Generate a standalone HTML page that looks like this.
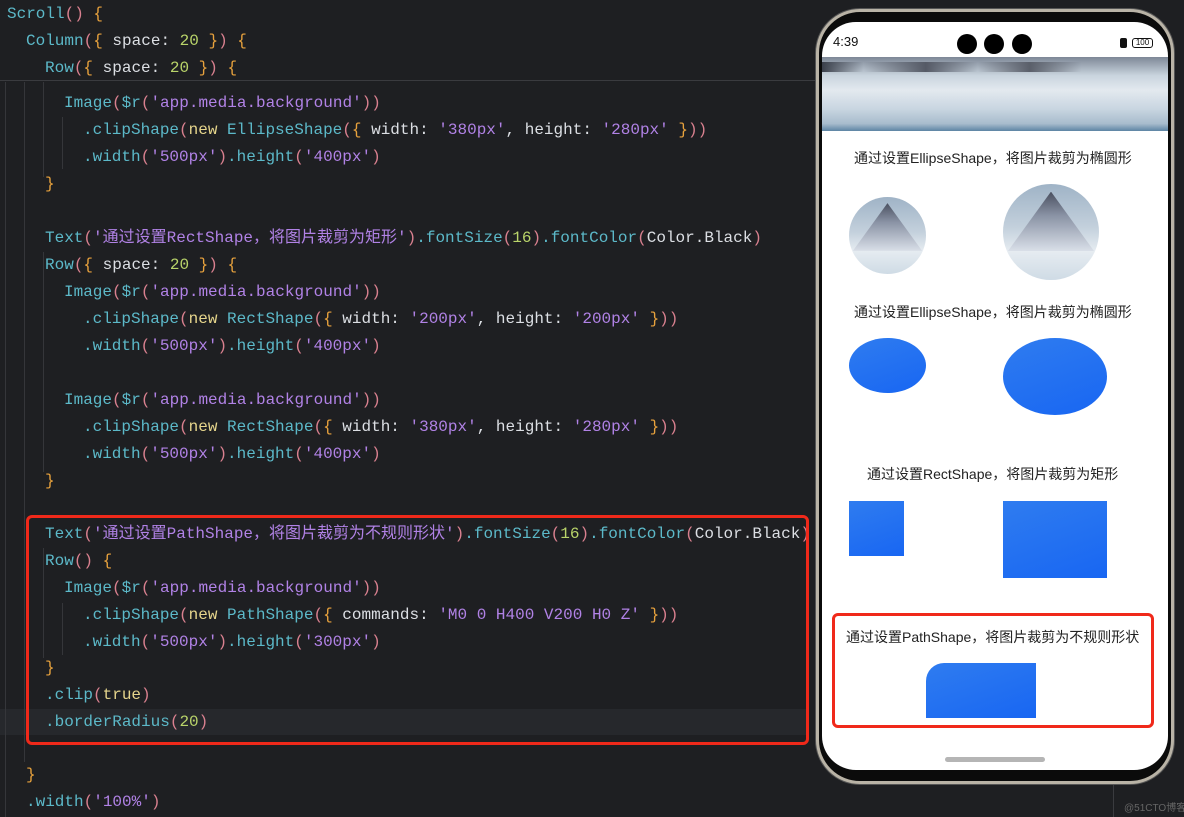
<!DOCTYPE html>
<html><head><meta charset="utf-8"><style>
*{margin:0;padding:0;box-sizing:border-box}
body{width:1184px;height:817px;background:#1e1f22;position:relative;overflow:hidden;font-family:"Liberation Mono","Noto Sans CJK SC",monospace}
.l{position:absolute;left:0;height:22px;line-height:22px;font-size:16px;white-space:pre;color:#dcdfe4}
.f{color:#5cb9c9}.p{color:#d9808f}.b{color:#e8a23d}.s{color:#b182e6}.n{color:#b9d46a}.k{color:#e6d58c}
.g{position:absolute;width:1px;background:#35363a}
.ph{font-family:"Liberation Sans","Noto Sans CJK SC",sans-serif;color:#222;font-size:14px;position:absolute;white-space:nowrap}
.blue{position:absolute;background:linear-gradient(160deg,#2f7cf0,#1866f2)}
.mt{position:absolute;border-radius:50%;overflow:hidden;background:linear-gradient(180deg,#9fb3c6 0%,#c3d0dc 45%,#e6ecf1 70%,#cfdbe5 100%)}
.mt::before{content:"";position:absolute;left:5%;top:8%;width:90%;height:62%;background:linear-gradient(180deg,#4a5060 0%,#8a93a5 40%,#d9dfe8 100%);clip-path:polygon(50% 0,100% 100%,0 100%)}
</style></head><body>
<div style="position:absolute;left:0;top:0;width:820px;height:81px;border-bottom:1px solid #3a3b3f"></div>
<div style="position:absolute;left:0;top:709px;width:808px;height:26px;background:#26282c"></div>
<div class="g" style="left:5px;top:82px;height:735px"></div>
<div class="g" style="left:24px;top:82px;height:680px"></div>
<div class="g" style="left:43px;top:82px;height:95px"></div>
<div class="g" style="left:62px;top:117px;height:52px"></div>
<div class="g" style="left:43px;top:252px;height:220px"></div>
<div class="g" style="left:43px;top:548px;height:110px"></div>
<div class="g" style="left:62px;top:603px;height:52px"></div>

<div class="l" style="top:3px;left:7px"><span class="f">Scroll</span><span class="p">()</span> <span class="b">{</span></div>
<div class="l" style="top:30px;left:26px"><span class="f">Column</span><span class="p">(</span><span class="b">{</span> space: <span class="n">20</span> <span class="b">}</span><span class="p">)</span> <span class="b">{</span></div>
<div class="l" style="top:57px;left:45px"><span class="f">Row</span><span class="p">(</span><span class="b">{</span> space: <span class="n">20</span> <span class="b">}</span><span class="p">)</span> <span class="b">{</span></div>
<div class="l" style="top:92px;left:64px"><span class="f">Image</span><span class="p">(</span><span class="f">$r</span><span class="p">(</span><span class="s">'app.media.background'</span><span class="p">))</span></div>
<div class="l" style="top:119px;left:83px"><span class="f">.clipShape</span><span class="p">(</span><span class="k">new</span> <span class="f">EllipseShape</span><span class="p">(</span><span class="b">{</span> width: <span class="s">'380px'</span>, height: <span class="s">'280px'</span> <span class="b">}</span><span class="p">))</span></div>
<div class="l" style="top:146px;left:83px"><span class="f">.width</span><span class="p">(</span><span class="s">'500px'</span><span class="p">)</span><span class="f">.height</span><span class="p">(</span><span class="s">'400px'</span><span class="p">)</span></div>
<div class="l" style="top:173px;left:45px"><span class="b">}</span></div>
<div class="l" style="top:227px;left:45px"><span class="f">Text</span><span class="p">(</span><span class="s">'通过设置RectShape，将图片裁剪为矩形'</span><span class="p">)</span><span class="f">.fontSize</span><span class="p">(</span><span class="n">16</span><span class="p">)</span><span class="f">.fontColor</span><span class="p">(</span>Color.Black<span class="p">)</span></div>
<div class="l" style="top:254px;left:45px"><span class="f">Row</span><span class="p">(</span><span class="b">{</span> space: <span class="n">20</span> <span class="b">}</span><span class="p">)</span> <span class="b">{</span></div>
<div class="l" style="top:281px;left:64px"><span class="f">Image</span><span class="p">(</span><span class="f">$r</span><span class="p">(</span><span class="s">'app.media.background'</span><span class="p">))</span></div>
<div class="l" style="top:308px;left:83px"><span class="f">.clipShape</span><span class="p">(</span><span class="k">new</span> <span class="f">RectShape</span><span class="p">(</span><span class="b">{</span> width: <span class="s">'200px'</span>, height: <span class="s">'200px'</span> <span class="b">}</span><span class="p">))</span></div>
<div class="l" style="top:335px;left:83px"><span class="f">.width</span><span class="p">(</span><span class="s">'500px'</span><span class="p">)</span><span class="f">.height</span><span class="p">(</span><span class="s">'400px'</span><span class="p">)</span></div>
<div class="l" style="top:389px;left:64px"><span class="f">Image</span><span class="p">(</span><span class="f">$r</span><span class="p">(</span><span class="s">'app.media.background'</span><span class="p">))</span></div>
<div class="l" style="top:416px;left:83px"><span class="f">.clipShape</span><span class="p">(</span><span class="k">new</span> <span class="f">RectShape</span><span class="p">(</span><span class="b">{</span> width: <span class="s">'380px'</span>, height: <span class="s">'280px'</span> <span class="b">}</span><span class="p">))</span></div>
<div class="l" style="top:443px;left:83px"><span class="f">.width</span><span class="p">(</span><span class="s">'500px'</span><span class="p">)</span><span class="f">.height</span><span class="p">(</span><span class="s">'400px'</span><span class="p">)</span></div>
<div class="l" style="top:470px;left:45px"><span class="b">}</span></div>
<div class="l" style="top:523px;left:45px"><span class="f">Text</span><span class="p">(</span><span class="s">'通过设置PathShape，将图片裁剪为不规则形状'</span><span class="p">)</span><span class="f">.fontSize</span><span class="p">(</span><span class="n">16</span><span class="p">)</span><span class="f">.fontColor</span><span class="p">(</span>Color.Black<span class="p">)</span></div>
<div class="l" style="top:550px;left:45px"><span class="f">Row</span><span class="p">()</span> <span class="b">{</span></div>
<div class="l" style="top:577px;left:64px"><span class="f">Image</span><span class="p">(</span><span class="f">$r</span><span class="p">(</span><span class="s">'app.media.background'</span><span class="p">))</span></div>
<div class="l" style="top:604px;left:83px"><span class="f">.clipShape</span><span class="p">(</span><span class="k">new</span> <span class="f">PathShape</span><span class="p">(</span><span class="b">{</span> commands: <span class="s">'M0 0 H400 V200 H0 Z'</span> <span class="b">}</span><span class="p">))</span></div>
<div class="l" style="top:631px;left:83px"><span class="f">.width</span><span class="p">(</span><span class="s">'500px'</span><span class="p">)</span><span class="f">.height</span><span class="p">(</span><span class="s">'300px'</span><span class="p">)</span></div>
<div class="l" style="top:657px;left:45px"><span class="b">}</span></div>
<div class="l" style="top:684px;left:45px"><span class="f">.clip</span><span class="p">(</span><span class="k">true</span><span class="p">)</span></div>
<div class="l" style="top:711px;left:45px"><span class="f">.borderRadius</span><span class="p">(</span><span class="n">20</span><span class="p">)</span></div>
<div class="l" style="top:764px;left:26px"><span class="b">}</span></div>
<div class="l" style="top:791px;left:26px"><span class="f">.width</span><span class="p">(</span><span class="s">'100%'</span><span class="p">)</span></div>
<div style="position:absolute;left:26px;top:515px;width:783px;height:230px;border:3px solid #f0291a;border-radius:6px"></div>

<!-- phone -->
<div style="position:absolute;left:816px;top:9px;width:358px;height:775px;border-radius:44px;background:#0b0b0b;border:3px solid #b9b3a6;box-shadow:0 0 0 1px #555"></div>
<div style="position:absolute;left:822px;top:22px;width:346px;height:748px;border-radius:34px;background:#fff;overflow:hidden">
 <div style="position:absolute;left:0;top:35px;width:346px;height:74px;background:linear-gradient(180deg,#7d8796 0%,#c9d4de 25%,#e3e9ef 45%,#c9d6e1 70%,#a8bccd 90%,#5d84a4 100%)"></div>
 <div style="position:absolute;left:0;top:40px;width:346px;height:10px;background:linear-gradient(90deg,#3a3f4a 0%,transparent 12%,#555a66 30%,transparent 45%,#5a5f6a 60%,transparent 75%)"></div>
</div>
<div class="ph" style="left:833px;top:34px;font-size:13px;color:#111">4:39</div>
<div style="position:absolute;left:957px;top:34px;width:20px;height:20px;border-radius:50%;background:#000"></div>
<div style="position:absolute;left:984px;top:34px;width:20px;height:20px;border-radius:50%;background:#000"></div>
<div style="position:absolute;left:1012px;top:34px;width:20px;height:20px;border-radius:50%;background:#000"></div>
<div style="position:absolute;left:1120px;top:38px;width:7px;height:10px;background:#111;border-radius:2px"></div>
<div style="position:absolute;left:1132px;top:38px;width:21px;height:10px;border:1px solid #111;border-radius:3px;font:8px 'Liberation Sans';line-height:8px;text-align:center;color:#111">100</div>

<div class="ph" style="left:854px;top:148px">通过设置EllipseShape，将图片裁剪为椭圆形</div>
<div class="mt" style="left:849px;top:197px;width:77px;height:77px"></div>
<div class="mt" style="left:1003px;top:184px;width:96px;height:96px"></div>
<div class="ph" style="left:854px;top:302px">通过设置EllipseShape，将图片裁剪为椭圆形</div>
<div class="blue" style="left:849px;top:338px;width:77px;height:55px;border-radius:50%"></div>
<div class="blue" style="left:1003px;top:338px;width:104px;height:77px;border-radius:50%"></div>
<div class="ph" style="left:867px;top:464px">通过设置RectShape，将图片裁剪为矩形</div>
<div class="blue" style="left:849px;top:501px;width:55px;height:55px"></div>
<div class="blue" style="left:1003px;top:501px;width:104px;height:77px"></div>
<div style="position:absolute;left:832px;top:613px;width:322px;height:115px;border:3px solid #f0291a;border-radius:6px"></div>
<div class="ph" style="left:846px;top:627px">通过设置PathShape，将图片裁剪为不规则形状</div>
<div class="blue" style="left:926px;top:663px;width:110px;height:55px;border-top-left-radius:18px"></div>
<div style="position:absolute;left:945px;top:757px;width:100px;height:5px;border-radius:3px;background:#b5b5b5"></div>
<div style="position:absolute;left:1113px;top:785px;width:1px;height:32px;background:#3a3b3f"></div>
<div class="ph" style="left:1124px;top:799px;font-size:10px;color:#666">@51CTO博客</div>
</body></html>
